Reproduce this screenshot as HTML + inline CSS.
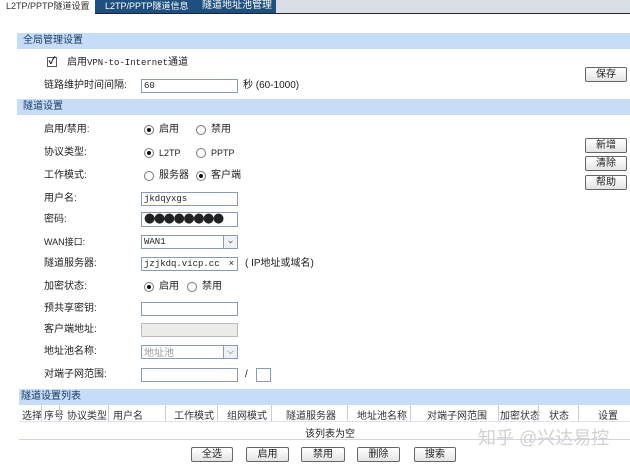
<!DOCTYPE html>
<html><head><meta charset="utf-8"><style>
*{margin:0;padding:0;box-sizing:border-box}
body{width:630px;height:465px;background:#fff;position:relative;overflow:hidden;font-family:"Liberation Sans","Noto Sans CJK SC",sans-serif;font-size:10px;color:#222}
.a{position:absolute;white-space:nowrap}
.band{position:absolute;left:17px;right:0;height:16px;background:#c7dcf7;color:#1a3a6a;font-size:10px;line-height:16px;padding-left:6px}
.in{position:absolute;left:141px;width:97px;height:14px;border:1px solid #8a9ab0;background:#fff;font-size:9px;line-height:12px;padding-left:2px;font-family:"Liberation Mono","Noto Sans CJK SC",monospace}
.lab{position:absolute;left:44px;font-size:10px;line-height:12px}
.rad{position:absolute;width:10px;height:10px;border:1px solid #777;border-radius:50%;background:#fff}
.rad.on::after{content:"";position:absolute;left:2px;top:2px;width:4px;height:4px;border-radius:50%;background:#111}
.btn{position:absolute;height:15px;border:1px solid #666;border-radius:2px;background:linear-gradient(#fff,#e4e4e4);font-size:10px;line-height:13px;text-align:center}
.dd{position:absolute;right:0;top:0;width:14px;height:12px;border-left:1px solid #8a9ab0;background:#eef2f7;font-size:8px;text-align:center;line-height:12px;font-weight:bold}
</style></head><body>
<div class="a" style="left:0;top:0;width:630px;height:13px;background:#d8dde6"></div>
<div class="a" style="left:0;top:13px;width:630px;height:1px;background:#223"></div>
<div class="a" style="left:0;top:0;width:95px;height:14px;background:#fff;font-size:9px;line-height:12px;padding-left:6px;color:#333">L2TP/PPTP隧道设置</div>
<div class="a" style="left:95px;top:0;width:95px;height:13px;background:#1d4f7f;color:#fff;font-size:9px;line-height:12px;padding-left:10px">L2TP/PPTP隧道信息</div>
<div class="a" style="left:190px;top:0;width:86px;height:13px;background:#1d4f7f;color:#fff;font-size:10px;line-height:12px;padding-left:12px">隧道地址池管理</div>

<div class="band" style="top:33px">全局管理设置</div>
<div class="a" style="left:47px;top:57px;width:10px;height:10px;border:1px solid #555;font-size:10px;line-height:8px;text-align:center;font-weight:bold">✓</div>
<div class="lab" style="left:67px;top:57px">启用<span style="font-family:'Liberation Mono';font-size:9px">VPN-to-Internet</span>通道</div>
<div class="lab" style="top:80px">链路维护时间间隔:</div>
<div class="in" style="top:79px">60</div>
<div class="lab" style="left:243px;top:80px">秒 (60-1000)</div>
<div class="btn" style="left:585px;top:67px;width:42px">保存</div>

<div class="band" style="top:99px">隧道设置</div>
<div class="lab" style="top:124px">启用/禁用:</div>
<div class="rad on" style="left:144px;top:125px"></div><div class="lab" style="left:159px;top:124px">启用</div>
<div class="rad" style="left:196px;top:125px"></div><div class="lab" style="left:211px;top:124px">禁用</div>
<div class="lab" style="top:147px">协议类型:</div>
<div class="rad on" style="left:144px;top:148px"></div><div class="lab" style="left:159px;top:147px;font-size:9px">L2TP</div>
<div class="rad" style="left:196px;top:148px"></div><div class="lab" style="left:211px;top:147px;font-size:9px">PPTP</div>
<div class="lab" style="top:170px">工作模式:</div>
<div class="rad" style="left:144px;top:171px"></div><div class="lab" style="left:159px;top:170px">服务器</div>
<div class="rad on" style="left:196px;top:171px"></div><div class="lab" style="left:211px;top:170px">客户端</div>
<div class="lab" style="top:193px">用户名:</div><div class="in" style="top:192px">jkdqyxgs</div>
<div class="lab" style="top:214px">密码:</div><div class="in" style="top:212px;height:15px;font-family:'DejaVu Sans';font-size:13px;letter-spacing:-1.5px;line-height:12px">●●●●●●●●</div>
<div class="lab" style="top:236px;font-size:9px">WAN接口:</div><div class="in" style="top:235px">WAN1<div class="dd">⌵</div></div>
<div class="lab" style="top:258px">隧道服务器:</div><div class="in" style="top:257px">jzjkdq.vicp.cc<span style="position:absolute;right:3px">×</span></div>
<div class="lab" style="left:245px;top:258px">( IP地址或域名)</div>
<div class="lab" style="top:281px">加密状态:</div>
<div class="rad on" style="left:144px;top:282px"></div><div class="lab" style="left:159px;top:281px">启用</div>
<div class="rad" style="left:187px;top:282px"></div><div class="lab" style="left:202px;top:281px">禁用</div>
<div class="lab" style="top:303px">预共享密钥:</div><div class="in" style="top:302px"></div>
<div class="lab" style="top:324px">客户端地址:</div><div class="in" style="top:323px;background:#ececea;border-color:#bbb"></div>
<div class="lab" style="top:346px">地址池名称:</div><div class="in" style="top:345px;color:#999;font-family:'Noto Sans CJK SC';font-size:10px">地址池<div class="dd">⌵</div></div>
<div class="lab" style="top:369px">对端子网范围:</div><div class="in" style="top:368px"></div>
<div class="lab" style="left:245px;top:369px">/</div>
<div class="a" style="left:256px;top:368px;width:15px;height:14px;border:1px solid #8a9ab0"></div>
<div class="btn" style="left:585px;top:138px;width:42px">新增</div>
<div class="btn" style="left:585px;top:156px;width:42px">清除</div>
<div class="btn" style="left:585px;top:175px;width:42px">帮助</div>

<div class="band" style="top:389px;left:19px;padding-left:2px">隧道设置列表</div>
<div class="a" style="left:19px;top:405px;width:611px;height:35px;border-bottom:1px solid #cfd6e0"></div>
<div class="a" style="left:19px;top:421px;width:611px;height:1px;background:#dde3ea"></div>
<div class="a" style="left:0;top:407px;font-size:10px;color:#333">
<span class="a" style="left:22px">选择</span><span class="a" style="left:44px">序号</span><span class="a" style="left:67px">协议类型</span><span class="a" style="left:113px">用户名</span><span class="a" style="left:174px">工作模式</span><span class="a" style="left:227px">组网模式</span><span class="a" style="left:286px">隧道服务器</span><span class="a" style="left:357px">地址池名称</span><span class="a" style="left:427px">对端子网范围</span><span class="a" style="left:500px">加密状态</span><span class="a" style="left:549px">状态</span><span class="a" style="left:598px">设置</span></div>
<div class="a" style="left:0;top:405px;width:630px;height:16px">
<span class="a" style="left:41px;top:0;width:1px;height:16px;background:#ccd"></span><span class="a" style="left:59px;top:0;width:1px;height:16px;background:#ccd"></span><span class="a" style="left:108px;top:0;width:1px;height:16px;background:#ccd"></span><span class="a" style="left:165px;top:0;width:1px;height:16px;background:#ccd"></span><span class="a" style="left:217px;top:0;width:1px;height:16px;background:#ccd"></span><span class="a" style="left:271px;top:0;width:1px;height:16px;background:#ccd"></span><span class="a" style="left:347px;top:0;width:1px;height:16px;background:#ccd"></span><span class="a" style="left:410px;top:0;width:1px;height:16px;background:#ccd"></span><span class="a" style="left:498px;top:0;width:1px;height:16px;background:#ccd"></span><span class="a" style="left:538px;top:0;width:1px;height:16px;background:#ccd"></span><span class="a" style="left:578px;top:0;width:1px;height:16px;background:#ccd"></span></div>
<div class="a" style="left:305px;top:425px;font-size:10px">该列表为空</div>
<div class="a" style="left:478px;top:424px;font-size:18px;color:#d0d0d0">知乎 @兴达易控</div>
<div class="btn" style="left:191px;top:447px;width:42px">全选</div>
<div class="btn" style="left:246px;top:447px;width:43px">启用</div>
<div class="btn" style="left:301px;top:447px;width:44px">禁用</div>
<div class="btn" style="left:357px;top:447px;width:43px">删除</div>
<div class="btn" style="left:414px;top:447px;width:42px">搜索</div>
</body></html>
